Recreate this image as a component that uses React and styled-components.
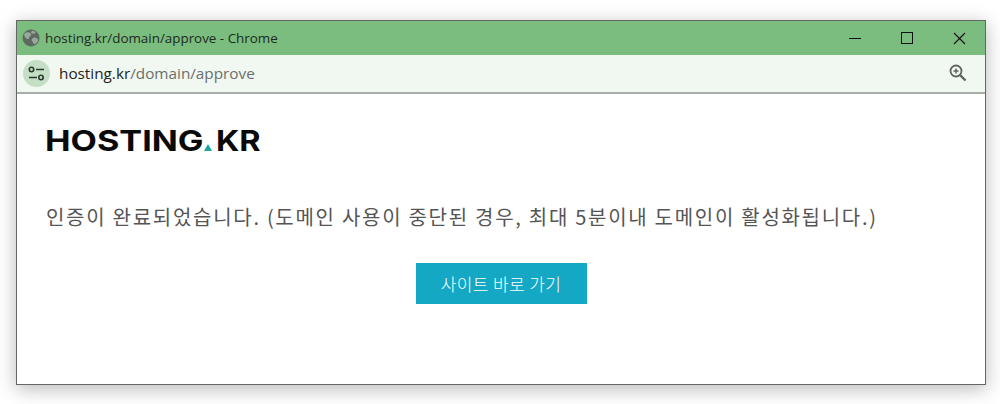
import React from 'react'
import styled, { createGlobalStyle } from 'styled-components'

const Global = createGlobalStyle`
  html, body { margin: 0; padding: 0; background: #fff; }
  body { width: 1000px; height: 404px; overflow: hidden; font-family: 'Open Sans', 'Noto Sans CJK KR', sans-serif; }
`

const Page = styled.div`
  box-sizing: border-box;
  width: 1000px;
  height: 404px;
  padding: 20px 14px 19px 16px;
`

const Window = styled.div`
  box-sizing: border-box;
  height: 365px;
  border: 1px solid #666;
  background: #fff;
  box-shadow: 0 4px 18px rgba(0, 0, 0, 0.28);
  display: flex;
  flex-direction: column;
`

const TitleBar = styled.div`
  height: 34px;
  background: #7bbc7f;
  display: flex;
  align-items: center;
  padding-left: 5px;
  flex: none;
`

const TitleText = styled.span`
  font-family: 'Open Sans', sans-serif;
  font-size: 13.4px;
  color: #1d2a1e;
  margin-left: 5px;
  flex: 1;
  white-space: pre;
`

const WinButton = styled.button`
  width: 52px;
  height: 34px;
  border: 0;
  padding: 0;
  background: none;
  display: flex;
  align-items: center;
  justify-content: center;
`

const AddressBar = styled.div`
  box-sizing: border-box;
  height: 39px;
  flex: none;
  background: #f1f7f1;
  border-bottom: 2px solid #a9aea9;
  display: flex;
  align-items: center;
  padding: 0 18px 1px 6px;
`

const SiteBadge = styled.div`
  width: 27px;
  height: 27px;
  border-radius: 50%;
  background: #c4dfc6;
  display: flex;
  align-items: center;
  justify-content: center;
  flex: none;
`

const Url = styled.div`
  font-family: 'Open Sans', sans-serif;
  font-size: 15.3px;
  color: #6b6f6b;
  margin-left: 9px;
  flex: 1;
`

const Host = styled.span`
  color: #1f2420;
`

const Content = styled.main`
  flex: 1;
  padding: 36px 0 0 28px;
`

const Logo = styled.div`
  display: flex;
  align-items: center;
  height: 22px;
  width: 216px;
  white-space: nowrap;
`

const LogoWord = styled.span`
  font-family: Inter, sans-serif;
  font-weight: 700;
  font-size: 29px;
  line-height: 22px;
  color: #0a0a0a;
  display: inline-block;
  transform-origin: left center;
  transform: scaleX(${p => p.$stretch});
  width: ${p => p.$width}px;
`

const LogoDot = styled.span`
  width: 0;
  height: 0;
  border-left: 4.5px solid transparent;
  border-right: 4.5px solid transparent;
  border-bottom: 7px solid #17a89e;
  align-self: flex-end;
  margin: 0 4px 1px 1px;
  flex: none;
`

const Message = styled.p`
  margin: 52px 0 0 1px;
  font-family: 'Noto Sans CJK KR', sans-serif;
  font-size: 20px;
  font-weight: 400;
  line-height: 26px;
  color: #555;
  letter-spacing: 1.72px;
  white-space: nowrap;
`

const ButtonRow = styled.div`
  display: flex;
  justify-content: center;
  margin: 33px 0 0 -28px;
`

const GoButton = styled.a`
  box-sizing: border-box;
  width: 171px;
  height: 41px;
  background: #15a8c5;
  color: #fff;
  font-family: 'Noto Sans CJK KR', sans-serif;
  font-weight: 300;
  font-size: 17px;
  letter-spacing: 0.4px;
  display: flex;
  align-items: center;
  justify-content: center;
`

const Globe = () => (
  <svg width="18" height="18" viewBox="0 0 18 18">
    <circle cx="9" cy="9" r="8.5" fill="#5d6a5f" />
    <path d="M3 4c2-1 5-1 6 1 1 2-2 2-2 4s-3 1-4-1-1-3 0-4zM11 9c2-1 5 0 5 2s-3 5-4 4-1-2-2-3 0-2 1-3zM10 1.500l4 1.500-2 2-3-1z" fill="#9aa79c" />
  </svg>
)

const SiteIcon = () => (
  <svg width="17" height="15" viewBox="0 0 17 15" fill="none" stroke="#2c3a2e" strokeWidth="1.600">
    <circle cx="3.500" cy="3.500" r="2.200" />
    <path d="M8 3.500h8M1 11.500h8" />
    <circle cx="13" cy="11.500" r="2.200" />
  </svg>
)

const ZoomIcon = () => (
  <svg width="18" height="18" viewBox="0 0 18 18" fill="none" stroke="#5f6460">
    <circle cx="7" cy="7" r="5.500" strokeWidth="1.800" />
    <path d="M4.500 7h5M7 4.500v5" strokeWidth="1.500" />
    <path d="M11 11l5.500 5.500" strokeWidth="2.400" />
  </svg>
)

const MinIcon = () => (
  <svg width="12" height="12" viewBox="0 0 12 12"><path d="M0 6.500h12" stroke="#111" strokeWidth="1" /></svg>
)

const MaxIcon = () => (
  <svg width="12" height="12" viewBox="0 0 12 12"><rect x=".5" y=".5" width="11" height="11" fill="none" stroke="#111" /></svg>
)

const CloseIcon = () => (
  <svg width="13" height="13" viewBox="0 0 13 13"><path d="M1 1l11 11M12 1L1 12" stroke="#111" strokeWidth="1.100" /></svg>
)

export default function App() {
  return (
    <>
      <Global />
      <Page>
        <Window>
          <TitleBar>
            <Globe />
            <TitleText>hosting.kr/domain/approve - Chrome</TitleText>
            <WinButton><MinIcon /></WinButton>
            <WinButton><MaxIcon /></WinButton>
            <WinButton><CloseIcon /></WinButton>
          </TitleBar>
          <AddressBar>
            <SiteBadge><SiteIcon /></SiteBadge>
            <Url><Host>hosting.kr</Host>/domain/approve</Url>
            <ZoomIcon />
          </AddressBar>
          <Content>
            <Logo>
              <LogoWord $stretch={1.18} $width={158}>HOSTING</LogoWord>
              <LogoDot />
              <LogoWord $stretch={1.12} $width={44}>KR</LogoWord>
            </Logo>
            <Message>인증이 완료되었습니다. (도메인 사용이 중단된 경우, 최대 5분이내 도메인이 활성화됩니다.)</Message>
            <ButtonRow>
              <GoButton>사이트 바로 가기</GoButton>
            </ButtonRow>
          </Content>
        </Window>
      </Page>
    </>
  )
}
